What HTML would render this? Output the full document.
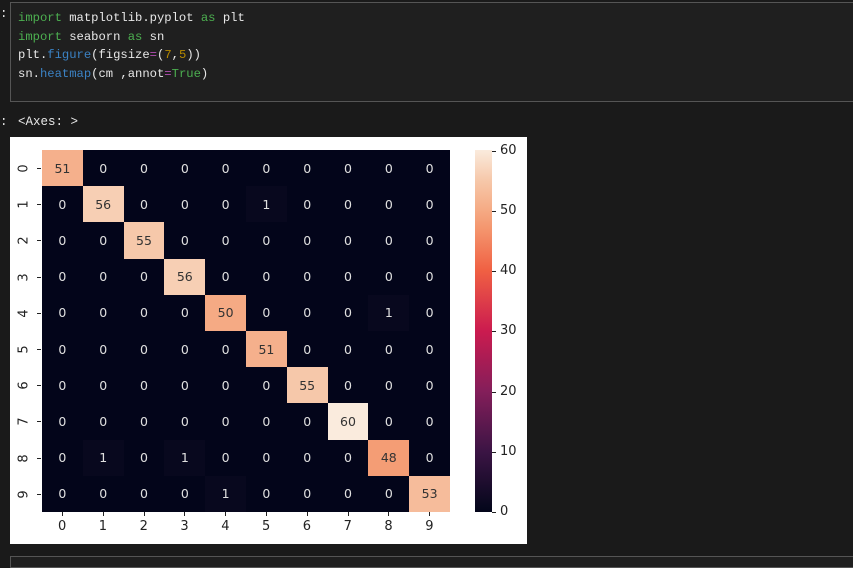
<!DOCTYPE html><html><head><style>
body{margin:0;width:853px;height:562px;background:#1a1a1a;overflow:hidden;font-family:"Liberation Mono",monospace;position:relative}
.code{position:absolute;left:10px;top:2px;width:845px;height:100px;border:1px solid #555;background:#1f1f1f;box-sizing:border-box}
.code pre{margin:0;position:absolute;left:7px;top:6px;font-size:12.2px;line-height:18.5px;color:#e8e8e8;font-family:"Liberation Mono",monospace}
.k{color:#4caf50}.f{color:#3b82c4}.n{color:#b58900}.e{color:#b44fb4}
.lbl{position:absolute;color:#e8e8e8;font-size:12.5px}
.fig{position:absolute;left:10px;top:137px;width:517px;height:407px;background:#fff}
.c{position:absolute;width:40.8px;height:36.2px;display:flex;align-items:center;justify-content:center;font-family:"DejaVu Sans",sans-serif;font-size:12.5px;color:#ddd}
.t{position:absolute;font-family:"DejaVu Sans",sans-serif;font-size:13px;color:#222}
</style></head><body>
<div class="lbl" style="left:0;top:7px">:</div>
<div class="code"><pre><span class="k">import</span> matplotlib.pyplot <span class="k">as</span> plt
<span class="k">import</span> seaborn <span class="k">as</span> sn
plt.<span class="f">figure</span>(figsize<span class="e">=</span>(<span class="n">7</span>,<span class="n">5</span>))
sn.<span class="f">heatmap</span>(cm ,annot<span class="e">=</span><span class="k">True</span>)</pre></div>
<div class="lbl" style="left:0;top:115px">:</div><div class="lbl" style="left:18px;top:115px">&lt;Axes: &gt;</div>
<div class="fig" id="fig"></div>
<div style="position:absolute;left:10px;top:556px;width:845px;height:10px;border:1px solid #555;background:#1f1f1f"></div>
<script>
var m=[[51,0,0,0,0,0,0,0,0,0],[0,56,0,0,0,1,0,0,0,0],[0,0,55,0,0,0,0,0,0,0],[0,0,0,56,0,0,0,0,0,0],[0,0,0,0,50,0,0,0,1,0],[0,0,0,0,0,51,0,0,0,0],[0,0,0,0,0,0,55,0,0,0],[0,0,0,0,0,0,0,60,0,0],[0,1,0,1,0,0,0,0,48,0],[0,0,0,0,1,0,0,0,0,53]];
var stops=[[0,[3,5,26]],[1/60,[8,8,30]],[10/60,[59,20,68]],[20/60,[132,30,90]],[30/60,[203,27,79]],[40/60,[240,96,67]],[47/60,[244,150,110]],[50/60,[245,170,132]],[55/60,[246,200,170]],[1,[250,235,221]]];
function col(v){var x=v/60;for(var i=1;i<stops.length;i++){if(x<=stops[i][0]){var a=stops[i-1],b=stops[i],t=(x-a[0])/(b[0]-a[0]);return 'rgb('+a[1].map(function(q,j){return Math.round(q+(b[1][j]-q)*t)}).join(',')+')';}}}
var f=document.getElementById('fig'),h='';
for(var r=0;r<10;r++)for(var c=0;c<10;c++){var v=m[r][c];h+='<div class="c" style="left:'+(32+c*40.8)+'px;top:'+(13+r*36.2)+'px;background:'+col(v)+';color:'+(v>30?'#333':'#e0e0e0')+'">'+v+'</div>';}
for(var i=0;i<10;i++){h+='<div class="t" style="left:'+(48+i*40.8)+'px;top:382px">'+i+'</div>';h+='<div style="position:absolute;left:'+(52+i*40.8)+'px;top:375px;width:1px;height:4px;background:#222"></div>';
h+='<div class="t" style="left:10px;top:'+(24+i*36.2)+'px;transform:rotate(-90deg)">'+i+'</div>';h+='<div style="position:absolute;left:27px;top:'+(31+i*36.2)+'px;width:4px;height:1px;background:#222"></div>';}
var g='linear-gradient(to top,'+stops.map(function(s){return col(s[0]*60)+' '+(s[0]*100)+'%'}).join(',')+')';
h+='<div style="position:absolute;left:465px;top:13px;width:17px;height:362px;background:'+g+'"></div>';
for(var k=0;k<=6;k++){var y=375-k*60.2;h+='<div style="position:absolute;left:482px;top:'+y+'px;width:4px;height:1px;background:#222"></div><div class="t" style="left:490px;top:'+(y-8)+'px">'+(k*10)+'</div>';}
f.innerHTML=h;
</script></body></html>
